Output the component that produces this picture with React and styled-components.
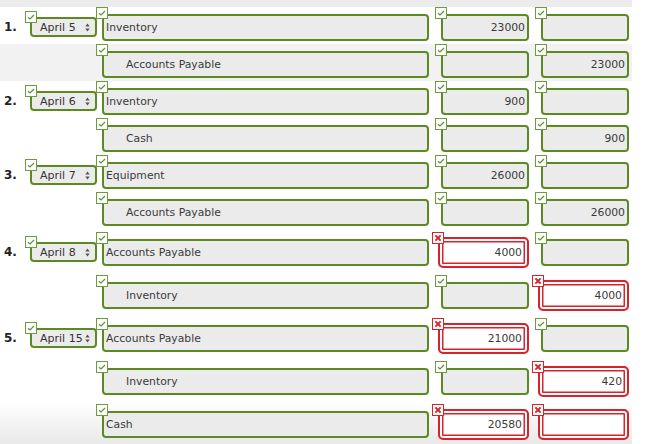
import React from 'react';
import styled, { createGlobalStyle } from 'styled-components';

const GREEN = '#5b8a22';
const RED = '#d8232a';

const GlobalStyle = createGlobalStyle`
  html, body { margin: 0; padding: 0; background: #fff; }
  body { font-family: "DejaVu Sans", Verdana, sans-serif; }
`;

const entries = [
  { n: '1.', date: 'April 5', lines: [
    { acct: 'Inventory', debit: '23000', credit: '' },
    { acct: 'Accounts Payable', indent: true, debit: '', credit: '23000', shaded: true },
  ] },
  { n: '2.', date: 'April 6', lines: [
    { acct: 'Inventory', debit: '900', credit: '' },
    { acct: 'Cash', indent: true, debit: '', credit: '900' },
  ] },
  { n: '3.', date: 'April 7', lines: [
    { acct: 'Equipment', debit: '26000', credit: '' },
    { acct: 'Accounts Payable', indent: true, debit: '', credit: '26000' },
  ] },
  { n: '4.', date: 'April 8', lines: [
    { acct: 'Accounts Payable', debit: '4000', credit: '', debitBad: true },
    { acct: 'Inventory', indent: true, debit: '', credit: '4000', creditBad: true },
  ] },
  { n: '5.', date: 'April 15', lines: [
    { acct: 'Accounts Payable', debit: '21000', credit: '', debitBad: true },
    { acct: 'Inventory', indent: true, debit: '', credit: '420', creditBad: true },
    { acct: 'Cash', debit: '20580', credit: '', debitBad: true, creditBad: true, fade: true },
  ] },
];

const Page = styled.div`
  width: 632px;
`;

const TopStrip = styled.div`
  height: 7px;
  background: #ececec;
`;

const Row = styled.div`
  display: flex;
  align-items: flex-start;
  box-sizing: border-box;
  height: ${p => (p.$flagged ? 43 : 37)}px;
  padding-top: ${p => (p.$flagged ? 3 : 0)}px;
  background: ${p => (p.$shaded ? '#f2f2f2' : p.$fade ? 'linear-gradient(#ffffff, #e9e9e9)' : 'transparent')};
`;

const Num = styled.div`
  flex: none;
  width: 25px;
  box-sizing: border-box;
  padding-left: 4px;
  margin-top: 13px;
  font-size: 12px;
  line-height: 14px;
  font-weight: bold;
  color: #222;
`;

const DateField = styled.div`
  position: relative;
  flex: none;
  width: 71px;
  box-sizing: border-box;
  padding: 10px 0 0 5px;
`;

const Field = styled.div`
  position: relative;
  flex: none;
  box-sizing: border-box;
  margin-left: ${p => p.$offset}px;
  padding: ${p => (p.$bad ? 5 : 7)}px 0 0 6px;
`;

const Mark = styled.span`
  position: absolute;
  left: 0;
  top: ${p => p.$top}px;
  width: 12px;
  height: 12px;
  box-sizing: border-box;
  background: #fff;
  border: 1px solid ${p => (p.$bad ? RED : '#6e9c3c')};
  display: flex;
  align-items: center;
  justify-content: center;
  z-index: 1;
`;

const Select = styled.div`
  width: 67px;
  height: 20px;
  box-sizing: border-box;
  border: 2px solid ${GREEN};
  border-radius: 4px;
  background: #ebebeb;
  display: flex;
  align-items: center;
  justify-content: space-between;
  padding: 0 5px 0 8px;
  font-size: 11px;
  color: #333;
  white-space: nowrap;
`;

const Box = styled.div`
  box-sizing: border-box;
  height: ${p => (p.$bad ? 31 : 27)}px;
  border: 2px solid ${p => (p.$bad ? RED : GREEN)};
  border-radius: ${p => (p.$bad ? 5 : 4)}px;
  background: ${p => (p.$bad ? '#fff' : '#ebebeb')};
  box-shadow: ${p => (p.$bad ? `inset 0 0 0 2px #fff, inset 0 0 0 3.5px ${RED}` : 'none')};
  display: flex;
  align-items: center;
  justify-content: ${p => (p.$right ? 'flex-end' : 'flex-start')};
  padding: 0 ${p => (p.$bad ? 5 : 2)}px 0 ${p => (p.$indent ? 22 : 2)}px;
  font-size: 10.8px;
  color: #3a3a3a;
  white-space: nowrap;
  overflow: hidden;
`;

const Tick = ({ bad }) => (
  bad ? (
    <svg width="8" height="8" viewBox="0 0 8 8">
      <path d="M2 2 L6 6 M6 2 L2 6" stroke={RED} strokeWidth="1.8" strokeLinecap="square" />
    </svg>
  ) : (
    <svg width="8" height="8" viewBox="0 0 8 8">
      <path d="M1 4.2 L3 6 L7 2" stroke="#5f9137" strokeWidth="1.2" fill="none" />
    </svg>
  )
);

const Arrows = () => (
  <svg width="5" height="9" viewBox="0 0 5 9">
    <path d="M2.5 0.5 L4.7 3.5 L0.3 3.5 Z M2.5 8.5 L4.7 5.5 L0.3 5.5 Z" fill="#555" />
  </svg>
);

const MoneyField = ({ value, bad }) => (
  <Field $offset={bad ? 3 : 6} $bad={bad}>
    <Mark $top={0} $bad={bad}><Tick bad={bad} /></Mark>
    <Box $bad={bad} $right style={{ width: bad ? 91 : 88 }}>{value}</Box>
  </Field>
);

const Line = ({ entry, line, first }) => {
  const flagged = line.debitBad || line.creditBad;
  return (
    <Row $flagged={flagged} $shaded={line.shaded} $fade={line.fade}>
      <Num>{first ? entry.n : ''}</Num>
      <DateField>
        {first && (
          <>
            <Mark $top={4}><Tick /></Mark>
            <Select>{entry.date}<Arrows /></Select>
          </>
        )}
      </DateField>
      <Field $offset={0}>
        <Mark $top={0}><Tick /></Mark>
        <Box $indent={line.indent} style={{ width: 327 }}>{line.acct}</Box>
      </Field>
      <MoneyField value={line.debit} bad={line.debitBad} />
      <MoneyField value={line.credit} bad={line.creditBad} />
    </Row>
  );
};

export default function App() {
  return (
    <>
      <GlobalStyle />
      <Page>
        <TopStrip />
        {entries.map(entry =>
          entry.lines.map((line, i) => (
            <Line key={entry.n + i} entry={entry} line={line} first={i === 0} />
          ))
        )}
      </Page>
    </>
  );
}
